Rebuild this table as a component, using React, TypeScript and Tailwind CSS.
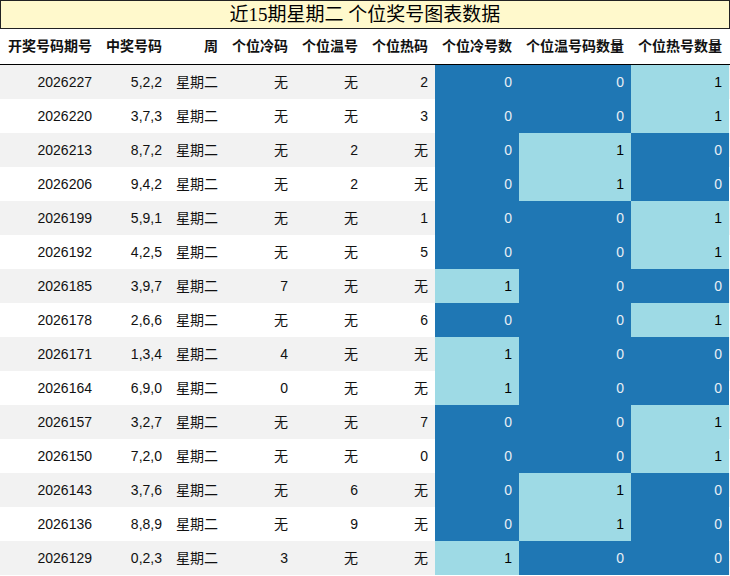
import React from "react";

type Row = [string, string, string, string, string, number, number, number];

const rows: Row[] = [
  ["2026227", "5,2,2", "无", "无", "2", 0, 0, 1],
  ["2026220", "3,7,3", "无", "无", "3", 0, 0, 1],
  ["2026213", "8,7,2", "无", "2", "无", 0, 1, 0],
  ["2026206", "9,4,2", "无", "2", "无", 0, 1, 0],
  ["2026199", "5,9,1", "无", "无", "1", 0, 0, 1],
  ["2026192", "4,2,5", "无", "无", "5", 0, 0, 1],
  ["2026185", "3,9,7", "7", "无", "无", 1, 0, 0],
  ["2026178", "2,6,6", "无", "无", "6", 0, 0, 1],
  ["2026171", "1,3,4", "4", "无", "无", 1, 0, 0],
  ["2026164", "6,9,0", "0", "无", "无", 1, 0, 0],
  ["2026157", "3,2,7", "无", "无", "7", 0, 0, 1],
  ["2026150", "7,2,0", "无", "无", "0", 0, 0, 1],
  ["2026143", "3,7,6", "无", "6", "无", 0, 1, 0],
  ["2026136", "8,8,9", "无", "9", "无", 0, 1, 0],
  ["2026129", "0,2,3", "3", "无", "无", 1, 0, 0],
];

const headers = [
  "开奖号码期号",
  "中奖号码",
  "周",
  "个位冷码",
  "个位温号",
  "个位热码",
  "个位冷号数",
  "个位温号码数量",
  "个位热号数量",
];

const cols = "grid grid-cols-[99px_70px_56px_70px_70px_70px_84px_112px_98px]";

function CountCell({ value }: { value: number }) {
  return (
    <div
      className={
        value === 1
          ? "flex items-center justify-end pr-[7px] bg-[#9edae5] text-black"
          : "flex items-center justify-end pr-[7px] bg-[#1f77b4] text-[#e8eef4]"
      }
    >
      {value}
    </div>
  );
}

export default function App() {
  return (
    <div className="w-[730px] h-[576px] bg-white overflow-hidden font-['Liberation_Sans','Noto_Sans_CJK_SC',sans-serif] text-[14px] text-[#111]">
      <div className="w-[730px] h-[29px] border border-[#222] bg-[#fff9cc] flex items-center justify-center font-['Liberation_Serif','Noto_Sans_CJK_SC',serif] text-[19px] leading-none text-black">
        近15期星期二 个位奖号图表数据
      </div>

      <div className={`${cols} h-[36px] border-b border-black font-bold`}>
        {headers.map((h) => (
          <div key={h} className="flex items-center justify-end pr-[7px] whitespace-nowrap">
            {h}
          </div>
        ))}
      </div>

      {rows.map((r, i) => (
        <div
          key={r[0]}
          className={`${cols} h-[34px] ${i % 2 === 0 ? "bg-[#f2f2f2]" : "bg-white"}`}
        >
          <div className="flex items-center justify-end pr-[7px]">{r[0]}</div>
          <div className="flex items-center justify-end pr-[7px]">{r[1]}</div>
          <div className="flex items-center justify-end pr-[7px]">星期二</div>
          <div className="flex items-center justify-end pr-[7px]">{r[2]}</div>
          <div className="flex items-center justify-end pr-[7px]">{r[3]}</div>
          <div className="flex items-center justify-end pr-[7px]">{r[4]}</div>
          <CountCell value={r[5]} />
          <CountCell value={r[6]} />
          <CountCell value={r[7]} />
        </div>
      ))}
    </div>
  );
}
